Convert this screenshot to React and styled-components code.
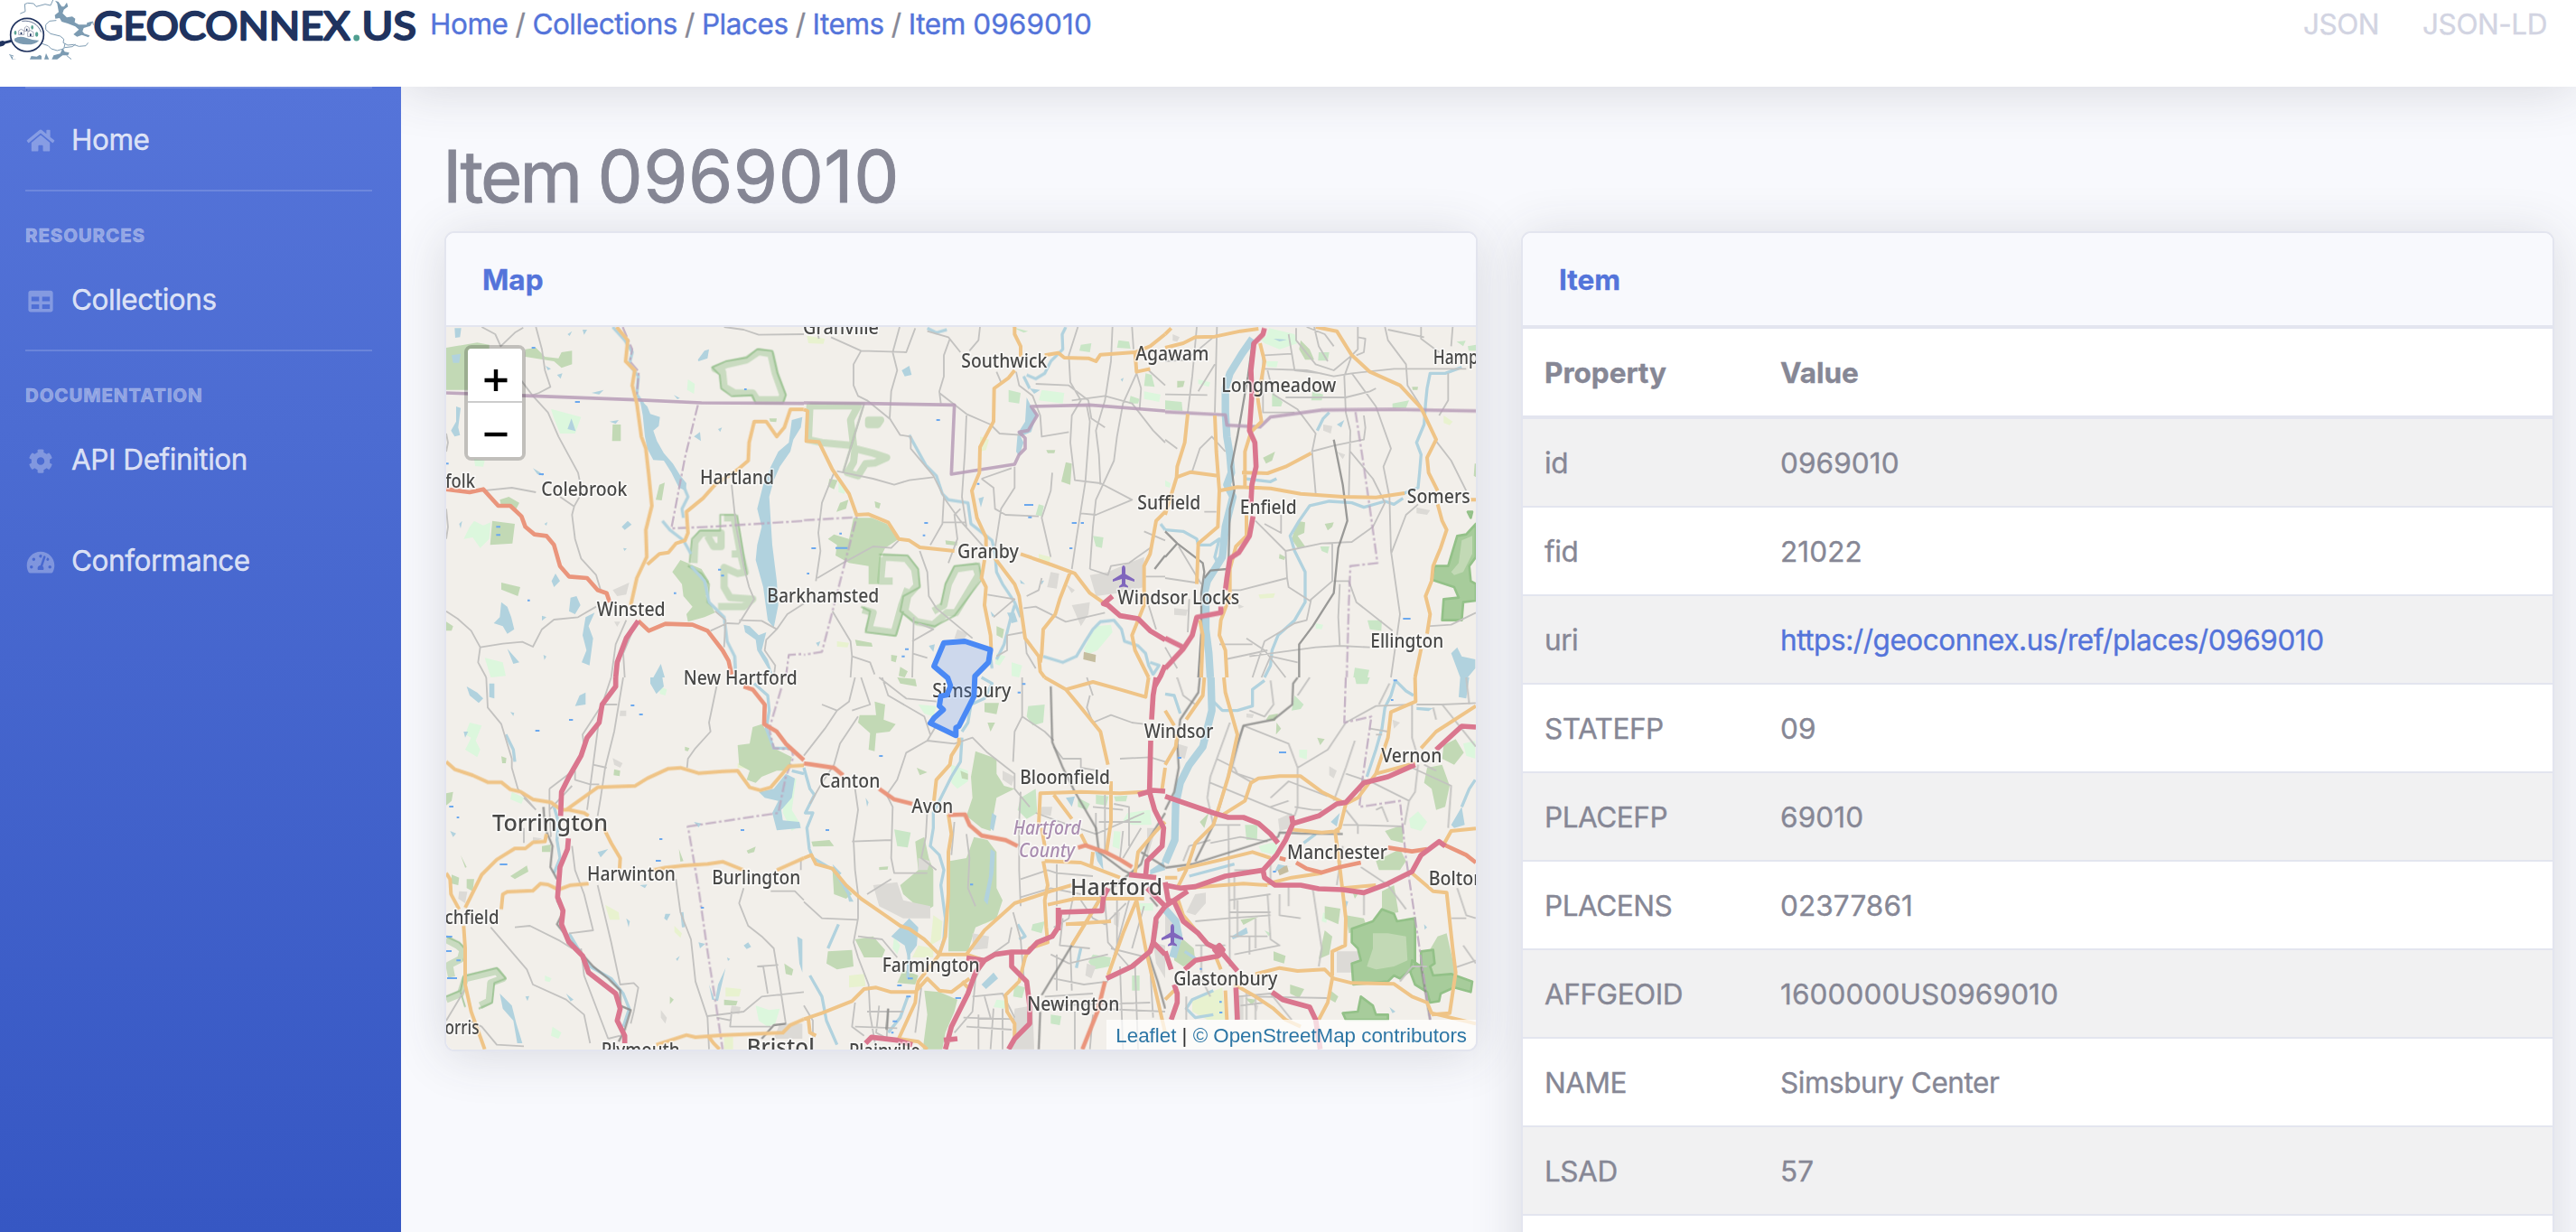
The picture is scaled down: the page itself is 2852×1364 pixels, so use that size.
import React from "react";
import styled, { createGlobalStyle } from "styled-components";
import { FaHome, FaTable, FaCog, FaTachometerAlt } from "react-icons/fa";

const blue = "#5474da";
const gray = "#868795";
const line = "#e3e5ef";
const shadow = "0 5px 56px 0 rgba(58, 59, 69, 0.16)";

const Global = createGlobalStyle`
  * { box-sizing: border-box; }
  html, body { margin: 0; padding: 0; }
  body {
    font-family: Inter, "Liberation Sans", sans-serif;
    font-size: 31.5px;
    line-height: 48px;
    color: ${gray};
    letter-spacing: -0.45px;
    -webkit-text-stroke: 0.35px currentColor;
    overflow: hidden;
  }
`;

const Page = styled.div`
  width: 2852px;
  height: 1364px;
  display: flex;
  flex-direction: column;
  overflow: hidden;
  background: #fff;
`;

const Header = styled.header`
  flex: none;
  height: 96px;
  display: flex;
  align-items: flex-start;
  background: #fff;
`;

const LogoSvg = styled.svg`
  flex: none;
  width: 476px;
  height: 70px;
  -webkit-text-stroke: 0;
`;

const Crumbs = styled.nav`
  display: flex;
  gap: 8px;
  padding-top: 3px;
`;

const Link = styled.a`
  color: ${blue};
  text-decoration: none;
`;

const Digits = styled.span`
  letter-spacing: 0.1px;
`;

const Formats = styled.nav`
  margin-left: auto;
  padding: 3px 32px 0 0;
  display: flex;
  gap: 48px;
`;

const FormatLink = styled.a`
  color: #d2d4e2;
`;

const Main = styled.div`
  flex: 1;
  min-height: 0;
  display: flex;
`;

const Sidebar = styled.aside`
  flex: none;
  width: 444px;
  padding: 0 32px 0 28px;
  display: flex;
  flex-direction: column;
  background: linear-gradient(180deg, #5574d9 0, #4c6cd2 380px, #3657c3 1268px);
`;

const Divider = styled.hr`
  flex: none;
  width: 100%;
  height: 2px;
  border: 0;
  margin: 0 0 ${(p) => (p.$gap ? 32 : 0)}px;
  background: rgba(255, 255, 255, 0.16);
`;

const NavHeading = styled.div`
  padding-top: 1px;
  height: 31.2px;
  font-size: 20.5px;
  line-height: 31.2px;
  font-weight: 800;
  letter-spacing: 0.85px;
  text-transform: uppercase;
  color: rgba(255, 255, 255, 0.4);
`;

const NavItem = styled.a`
  height: 112px;
  padding-top: 2px;
  display: flex;
  align-items: center;
  gap: 17px;
  color: rgba(255, 255, 255, 0.8);

  svg {
    width: 34px;
    height: 27.2px;
    margin-top: 2px;
    color: rgba(255, 255, 255, 0.3);
  }
`;

const Content = styled.main`
  position: relative;
  flex: 1;
  padding: 51px 24px 0 48px;
  background: #f8f9fd;
  overflow: hidden;

  &::before {
    content: "";
    position: absolute;
    inset: -96px 0 auto 0;
    height: 96px;
    box-shadow: ${shadow};
  }
`;

const Title = styled.h1`
  margin: 0 0 13px -2px;
  font-size: 79.5px;
  line-height: 96px;
  font-weight: 400;
  letter-spacing: -2.9px;
  -webkit-text-stroke-width: 0.9px;

  ${Digits} { letter-spacing: 0.5px; }
`;

const Columns = styled.div`
  display: grid;
  grid-template-columns: 1fr 1fr;
  gap: 48px;
  align-items: start;
`;

const Card = styled.section`
  border: 2px solid ${line};
  border-radius: 11px;
  background: #fff;
  box-shadow: ${shadow};
`;

const CardHeader = styled.h6`
  margin: 0;
  height: 104px;
  padding: 2px 40px 0;
  display: flex;
  align-items: center;
  border-bottom: 2px solid ${line};
  border-radius: 9px 9px 0 0;
  background: #f8f9fd;
  color: ${blue};
  font-size: 31.5px;
  font-weight: 700;
  letter-spacing: 0;
`;

const MapBox = styled.div`
  position: relative;
  height: 800px;
  overflow: hidden;
  border-radius: 0 0 9px 9px;
  -webkit-text-stroke: 0;
`;

const MapSvg = styled.svg`
  display: block;
  width: 1140px;
  height: 800px;
`;

const ZoomControl = styled.div`
  position: absolute;
  top: 20px;
  left: 20px;
  width: 68px;
  border: 4px solid rgba(0, 0, 0, 0.2);
  border-radius: 8px;
  background-clip: padding-box;
`;

const ZoomButton = styled.div`
  height: 60px;
  padding: ${(p) => (p.$top ? "12px 0 0 2px" : "10px 0 0 2px")};
  display: flex;
  align-items: center;
  justify-content: center;
  background: #fff;
  border-radius: ${(p) => (p.$top ? "4px 4px 0 0" : "0 0 4px 4px")};
  border-bottom: ${(p) => (p.$top ? "2px solid #ccc" : "0")};
`;

const Attribution = styled.div`
  position: absolute;
  right: 0;
  bottom: 0;
  height: 33px;
  padding: 0 10px;
  background: rgba(255, 255, 255, 0.72);
  font: 22.35px/36px "Liberation Sans", Arial, sans-serif;
  letter-spacing: 0;
  color: #333;
  white-space: nowrap;

  a { color: #2d76a5; }
`;

const Table = styled.table`
  width: 100%;
  border-collapse: separate;
  border-spacing: 0;
  table-layout: fixed;
`;

const HeadCell = styled.th`
  width: ${(p) => p.$w || "auto"};
  height: 102px;
  padding: 2px 24px 0;
  text-align: left;
  font-weight: 700;
  letter-spacing: 0;
  border-top: 2px solid ${line};
  border-bottom: 4px solid ${line};
`;

const Row = styled.tr`
  background: ${(p) => (p.$striped ? "#f1f1f2" : "#fff")};
  td { border-top: ${(p) => (p.$first ? "0" : `2px solid ${line}`)}; height: ${(p) => (p.$first ? 96 : 98)}px; }
`;

const Cell = styled.td`
  padding: 2px 24px 0;
  white-space: nowrap;
`;

/* Origins of the map tiles on the drawing; tile units are thirds of a pixel. */
const tiles = {
  A: [490, 350], B: [890, 350], C: [1290, 350],
  D: [490, 750], E: [890, 750], F: [1290, 750],
};

const layers = [
  { fill: "#dcf7dd", d: {
    A: "M105 680L135 695 160 685 155 740 125 770 100 735 70 740 90 700ZM360 308L460 335 440 390 390 390 370 340ZM140 1135L200 1150 210 1195 160 1200ZM815 210L838 225 835 258 812 245ZM105 475L140 480 135 500 108 498Z",
    B: "M970 1030L1020 1025 1025 1050 975 1110 940 1125 930 1105ZM790 245L865 255 860 290 780 280ZM690 1150L725 1160 715 1200 690 1195ZM640 1120L670 1130 650 1160 635 1155ZM115 545L138 565 135 590 115 585ZM1130 250L1185 260 1180 285 1130 275Z",
    C: "M345 40L430 60 440 90 380 110 330 90 310 70 335 70ZM110 210L150 220 145 235 110 225ZM335 150L375 150 370 170 340 168ZM500 1020L525 1025 520 1040 500 1038ZM0 545L18 555 15 570 0 565Z",
    D: "M90 150L130 160 110 210 125 240 115 265 75 240 95 200 75 190ZM230 380L270 400 262 420 225 405ZM1135 340L1175 335 1160 440 1190 490 1160 510 1130 450ZM1040 1090L1085 1105 1120 1100 1105 1150 1080 1160 1050 1140ZM720 30L745 40 740 60 722 55ZM365 1160L395 1180 385 1200 360 1190ZM340 990L362 1000 355 1012 340 1008Z",
    E: "M1075 450L1150 440 1155 490 1090 490 1060 475ZM380 90L440 95 430 130 400 120ZM1030 510L1052 512 1048 570 1025 562ZM640 1070L680 1075 670 1100 630 1095ZM1110 750H1160V775H1110ZM490 290L545 310 545 345 510 370 490 350ZM300 860L320 890 310 920 295 900Z",
    F: "M310 560L370 545 372 590 320 580ZM810 470L840 445 870 480 850 510 815 500ZM445 240L472 240 470 272 445 265ZM525 780L540 790 535 815 520 810ZM990 220L1030 210 1030 270 1000 260Z",
  }},
  { fill: "#e8f2cf", d: {
    B: "M10 65L70 75 65 92 15 90ZM110 1080L150 1085 145 1100 110 1098ZM585 400L615 410 605 445 585 450ZM780 790L820 800 815 820 780 815Z",
    D: "M540 755L585 780 588 805 555 805ZM940 1030L992 1035 985 1060 940 1060ZM770 825L795 850 790 865 770 845ZM935 1195H965V1235H935ZM980 285L1020 290 1015 302 980 300Z",
    E: "M150 990L200 985 205 1025 150 1030ZM430 790L460 810 455 870 420 890ZM380 890L430 900 430 930 360 930ZM600 770L650 760 640 800 600 820Z",
    F: "M90 1070L190 1030 200 1137 140 1137 90 1110Z",
    C: "M925 330L955 350 945 362 925 355ZM310 925L365 920 360 935 315 938Z",
  }},
  { fill: "#c2d9b5", d: {
    A: "M12 105L115 88 155 95 155 245 12 245ZM275 110L310 105 340 135 385 140 395 120 430 115 430 160 395 172 370 150 275 135ZM565 360H592V415H563ZM195 885L258 900 250 930 195 908ZM165 680L240 690 232 755 158 760ZM190 610L220 600 255 620 245 640 195 630ZM720 560L738 553 728 612 708 610ZM790 810L860 840 885 880 875 930 905 985 870 1000 815 1015 810 990 830 965 800 930 795 890 763 850ZM12 1015L35 1030 30 1045 12 1045ZM1085 340L1110 340 1108 352 1088 350Z",
    B: "M165 670L225 670 275 690 315 740 270 770 255 800 250 890 215 890 215 830 150 820 105 795 110 760 80 740 100 725 150 740ZM870 485L890 490 885 560 855 550ZM120 620L148 610 140 640 108 650ZM85 540L112 545 100 575 80 565ZM235 615L255 622 250 640 238 635ZM170 1075L225 1085 228 1098 175 1095ZM290 1125L310 1128 305 1150 290 1145ZM470 745L510 750 508 762 472 758ZM640 1030L665 1040 660 1070 640 1060ZM805 445L835 445 832 455 810 455ZM320 1165L345 1180 335 1200 315 1195Z",
    C: "M450 80L480 110 495 145 465 145 445 110ZM440 680L465 685 462 720 440 730 465 765 440 770 420 740ZM325 470L365 450 355 480 335 490ZM530 690L560 685 555 700 540 712ZM40 215L65 215 60 235 40 238ZM380 790L400 800 395 810 378 805ZM1028 490L1032 490V535L1025 530ZM820 235L840 235 838 245 822 245Z",
    D: "M1030 165L1060 155 1085 190 1100 235 1160 265 1150 310 1110 310 1060 330 1040 350 1010 340 1020 310 985 290 980 225 1020 220ZM12 385L35 380 30 410 12 425ZM225 660L280 625 285 645 240 670ZM330 560L360 555 358 580 330 580ZM80 670L105 670 100 710 80 700ZM1135 950L1165 970 1160 990 1140 985ZM935 1070L980 1075 975 1090 935 1088ZM570 305L590 310 588 328 568 325ZM785 570L800 610 790 612ZM30 655L55 665 52 690 30 685ZM195 262L212 268 210 285 198 285ZM805 230L820 235 815 245 805 243ZM1010 575L1040 562 1035 580 1015 585ZM755 1060L768 1070 755 1085ZM60 590L80 630 75 632Z",
    E: "M235 80L270 90 265 140 305 155 285 180 240 185 235 245 215 240 220 185 180 150 185 125 240 125ZM570 245L640 270 640 320 665 360 700 370 640 400 620 510 590 500 540 460 560 400 555 330ZM565 530L610 540 640 580 640 700 660 740 640 800 570 830 545 910 480 910 485 610 540 600ZM370 545L400 530 415 600 430 640 430 760 400 780 330 720 320 690 380 640ZM95 640L160 720 140 735 100 720ZM170 870L230 860 270 905 260 930 200 930ZM80 910L160 905 165 960 110 970 75 950ZM400 1040L450 1045 510 1070 500 1110 470 1180 460 1235 395 1235 410 1120ZM600 85L648 85 640 122 600 115ZM375 300L410 315 385 325ZM310 0L370 5 375 30 320 20ZM25 545L85 540 100 560 30 562ZM330 970L380 990 370 1020 310 1015ZM610 150L635 150 620 180ZM250 630L280 628 278 638 250 640ZM520 310L545 320 545 340 525 335Z",
    F: "M925 225L965 205 992 250 960 290 920 270ZM870 300L920 290 945 360 930 430 900 440 885 370 860 350ZM730 510L790 490 790 550 750 540ZM700 610L780 570 800 610 780 640 710 640ZM720 710L760 690 775 780 720 790ZM530 760L582 768 575 820 530 800ZM530 840L555 860 545 920 510 935ZM905 860L935 850 960 960 960 990 880 990 870 920ZM600 790L660 800 670 830 610 850ZM250 805L310 795 260 822ZM360 910L400 925 395 950 360 940ZM415 1020L462 1035 445 1065 415 1050ZM30 900L60 870 95 900 100 940 60 960 30 940ZM115 480L145 450 130 500ZM345 125L375 120 365 145 335 140ZM550 1040L575 1060 565 1080 548 1070ZM620 705L640 720 630 735ZM265 1065L300 1070 290 1090ZM505 200L530 205 515 225ZM370 150L385 170 368 190Z",
  }},
  { fill: "#c9e6c6", d: {
    B: "M680 245L720 255 715 290 680 285ZM780 625L797 630 790 665 770 660ZM960 730L995 735 990 770 970 765ZM1045 80L1080 85 1085 108 1040 105ZM1085 265L1115 275 1110 290 1080 290ZM1135 190L1155 195 1165 235 1130 232ZM920 95L955 90 950 120 915 115ZM690 36L745 50 730 55Z",
    C: "M510 120L545 120 540 148 508 148ZM0 280L55 285 58 315 0 310ZM355 250L390 285 385 300 355 300ZM490 250L525 260 520 280 485 280ZM755 290L810 280 800 305 755 305ZM672 1010L720 1010 718 1045 680 1040ZM630 1168L678 1175 672 1200 625 1200ZM515 765L545 765 540 788 520 780ZM968 85L998 82 990 100ZM1005 100L1032 95V115L1008 115Z",
    E: "M300 505L355 515 345 565 310 560ZM745 95L800 90 795 150 760 160 740 130ZM700 1020L735 1030 725 1065 695 1060ZM720 400L770 370 775 450 740 470 710 440ZM760 820L800 810 790 850 755 840ZM820 1120L855 1125 850 1155 820 1150ZM1090 990H1115V1040H1090ZM970 390L1012 395 1005 425 970 420ZM910 400L950 420 940 440 910 430ZM960 920L1020 930 1015 960 965 970 945 945ZM1030 395L1075 392 1070 412 1035 412Z",
    F: "M630 0H680L672 22H635ZM430 60L460 90 450 105 420 110ZM265 490L307 490 305 540 270 540ZM330 840L350 850 345 860Z",
  }},
  { fill: "#dcdad6", d: {
    A: "M565 910L620 885 610 925 580 930ZM570 1015L590 1015 580 1032Z",
    B: "M820 850L848 855 840 905 808 900ZM890 960L950 950 945 990 920 1030ZM950 860L1010 850 1080 820 1130 800 1130 900 1040 920 970 930ZM510 1040L545 1055 530 1075 500 1070ZM870 890L900 910 890 920Z",
    C: "M30 970L75 975 70 995 30 992ZM525 360L555 365 550 390 525 380ZM835 635L880 645 870 660 835 655ZM570 450L598 460 590 475ZM25 60L48 70 40 85 25 82ZM240 955L262 965 245 972Z",
    D: "M565 268L598 285 590 300 570 290ZM55 710L82 712 75 750 52 735ZM960 1090L990 1095 985 1118 955 1112ZM725 1105L745 1130 740 1150 725 1130ZM590 110H610V128H588ZM1120 1150H1195V1200H1100ZM300 530L330 535 300 550Z",
    E: "M230 690L310 680 330 740 420 760 420 800 330 800 250 760ZM940 950L970 960 955 1000 935 990ZM700 1100L760 1090 765 1235 690 1235ZM560 850L615 860 610 900 560 905ZM790 430L825 430 820 460 785 455ZM660 310L700 330 690 360 660 340ZM380 600L420 610 410 640 380 640ZM1140 500L1170 500 1140 600ZM1160 880L1200 890V1000L1170 950ZM1030 780L1050 780 1045 830 1030 820Z",
    F: "M100 720L135 715 135 750 100 790 70 780ZM375 470L420 450 415 500 380 510ZM40 220L75 230 65 270 40 260ZM545 295L570 310 560 335 545 325ZM755 140L780 150 760 170ZM570 910L650 910 640 980 570 980ZM270 120L295 122 290 135 270 133ZM0 780L20 790 40 850 0 870ZM230 1060L260 1060 260 1137 230 1137ZM290 1080L310 1090 305 1110Z",
  }},
  { fill: "#c5bd9f", d: { B: "M930 1115L970 1125 968 1150 928 1140Z", F: "M370 630L405 625 410 645 380 658Z" }},
  { fill: "#b1d2de", d: {
    A: "M655 275L680 300 690 325 722 335 718 365 700 380 712 415 735 455 765 490 790 530 810 555 808 580 785 570 760 520 735 480 700 478 680 440 672 400 665 330ZM1160 345L1195 335 1190 370 1165 410 1155 450 1120 500 1100 545 1085 600 1090 680 1095 760 1110 880 1115 960 1100 1035 1080 1010 1065 900 1040 810 1045 760 1060 700 1045 640 1065 560 1090 500 1115 450 1150 420ZM45 300L60 305 52 370 58 395 40 400 28 380 45 350ZM40 40L62 40 58 70 42 72ZM195 950L215 965 228 1000 238 1040 215 1055 200 1030 170 1020 190 1000ZM475 1000L505 985 485 1030 500 1070 488 1160 462 1150 478 1110 465 1060ZM425 935L445 930 458 960 440 990 420 980ZM375 855L390 880 370 900 362 880ZM848 145L870 115 885 110 880 140 850 150ZM835 400L855 385 858 415ZM415 375L428 340 442 382ZM595 700L615 680 628 692 605 710ZM1000 1025L1020 1030 1050 1060 1075 1050 1060 1110 1080 1140 1100 1200 1075 1160 1045 1110 1040 1075 1005 1050ZM700 1200L725 1155 738 1200ZM215 1105L255 1150 235 1155ZM30 130L60 125 55 155 35 155ZM465 45L480 45 470 62ZM495 255L535 245 520 260ZM380 195L398 190 392 208ZM555 350L585 345 575 358ZM300 505L325 520 335 530 315 525ZM915 375L928 370 922 385ZM768 262L788 272 780 276ZM330 995L345 1000 330 1012ZM55 690L65 680 60 705ZM335 1125L345 1130 338 1142ZM338 690L348 684 345 696ZM600 770L612 772 604 780ZM342 165L360 175 350 180ZM415 60L430 50 422 66Z",
    B: "M740 270L755 300 775 325 755 385 720 400 730 420 715 465 705 450 710 390 735 350ZM325 180L350 165 358 195 335 200ZM580 605L598 600 588 635ZM750 240L785 245 765 258ZM415 1095L435 1090 430 1115ZM675 985L700 985 710 1015 690 1020ZM40 1085L55 1080 48 1098ZM620 980L635 995 625 998ZM718 875L735 890 720 888ZM1052 210L1062 205 1058 218ZM785 880L798 878 790 892Z",
    C: "M950 1120L970 1100 985 1130 1030 1140V1170L1005 1200 980 1200ZM570 360L595 345 585 370ZM360 75L405 78 380 84Z",
    D: "M80 30L115 50 135 70 120 85 90 60ZM155 20L172 20 172 70 155 65ZM455 60L475 50 475 90 440 95ZM690 0H730L735 30 710 55 690 20ZM1050 380L1100 370 1140 320 1170 335 1160 400 1125 440 1130 475 1185 480 1190 500 1110 508 1095 450 1115 410 1070 400ZM190 1050L230 1090 245 1150 265 1215 248 1215 235 1140 200 1100ZM905 1075L915 1020 940 965 925 1030 915 1075 895 1070 885 1020ZM1178 860L1195 870V980L1185 950ZM740 785L757 785 745 808 736 800ZM850 880L872 885 855 900ZM70 180L85 180 75 200ZM410 1050L435 1070 425 1076ZM25 510L45 518 35 530ZM515 580L550 570 525 598ZM835 480L860 485 850 498ZM1000 890L1015 880 1025 895 1010 902ZM775 935L788 925 780 942ZM275 1060L288 1058 282 1075ZM610 800L622 810 618 830ZM655 690L680 688 672 700ZM945 930L955 935 948 942ZM225 115L238 118 235 128Z",
    E: "M320 830L350 800 380 830 375 890 345 930 335 890 290 860ZM625 450L640 460 630 510 618 500ZM620 570L635 580 630 650 610 755 598 740 615 660ZM590 1020L630 980 645 1000 605 1035ZM870 400L900 395 890 430ZM965 570L990 590 995 640 975 610ZM205 400L215 415 210 430ZM140 700L165 745 150 745ZM95 620L125 650 110 665ZM1150 640L1195 610 1200 640 1150 655ZM1140 680L1170 720 1150 725Z",
    F: "M980 0H1010L1000 70 975 65ZM950 490L985 430 995 490 960 500ZM220 860L270 830 275 850 225 870ZM375 620L420 630 400 625 360 650ZM835 98L890 102 875 112 835 108ZM685 930L700 925 680 965ZM860 820L870 830 862 838ZM745 1095L765 1110 755 1115ZM550 480L580 450 570 495ZM595 740L608 745 600 770Z",
  }},
  { stroke: "#8dbf83", w: 24, o: 0.4, d: {
    A: "M905 175L945 160 1010 145 1050 118 1090 125 1105 190 1130 260 1125 278 1045 278 1030 255 970 255 935 235 930 185ZM935 670L968 670 990 790 1005 850 980 855 935 835 935 900 955 935 1030 940 1000 965 915 965M835 820L838 750 860 720 925 720 925 765 900 765 880 730M960 790L990 790",
    B: "M20 298H180L155 345 165 430 60 420 15 410ZM170 440L230 455 275 470 235 488 205 490 180 530 145 520 165 485ZM215 345H255L245 360H215ZM262 800L340 805 368 840 376 895 345 930 335 980 375 1015 430 1025 475 985 505 985 580 860 570 830 505 840 480 890 465 960 430 980M195 975L230 985 215 1040 300 1052 325 960 345 905M262 800L255 880 295 880",
    D: "M12 870L50 890 68 905 60 935 22 955 30 995M12 1070L60 1050 75 1000 180 975 200 1000 160 1015 155 1075 125 1090",
  }},
  { stroke: "#84b67b", w: 6, o: 0.6, d: {
    A: "M895 170L940 150 1010 138 1045 110 1095 115 1112 190 1140 262 1130 290 1040 290 1028 262 960 266 925 240 920 195ZM815 830L860 855 885 890 880 950 910 975M978 660L1010 860M820 820L828 740 855 712 922 712 922 660 975 660",
    B: "M20 290H200L130 520M250 792L345 795 380 840 385 900 330 930 320 980 365 1015 435 1030 500 995 590 875 582 822 500 830 470 890 455 960M190 965L220 980 205 1050 305 1062 330 980",
    D: "M12 860L55 880 78 905 70 940M60 1045L75 1095M12 1060L60 1040 70 992 180 965 210 1000 172 1015 165 1080 120 1100",
  }},
  { fill: "#a7cc9b", stroke: "#93c188", w: 8, d: {
    C: "M970 730L1000 725 1032 690V800L1010 830 1015 880 1032 890V945L990 950 985 1010 920 1010 925 940 975 935 960 900 885 875 895 830 940 830ZM1005 650L1020 650 1015 670Z",
    F: "M620 835L690 810 720 770 760 785 770 810 830 800 830 960 780 1000 760 990 740 1010 625 1020 620 950 650 940 640 900 620 880ZM820 940L850 960 850 910 890 905 895 950 880 960 890 990 950 985 1020 1010 1015 1045 960 1030 915 1050 910 1075 880 1080 870 1045 830 1020 815 980ZM650 1060L690 1090 700 1120 740 1120 740 1137H600L590 1115 640 1110Z",
  }},
  { fill: "#c2d9b5", d: {
    F: "M690 850L740 850 800 860 805 940 760 960 700 970 670 960 690 900Z",
    C: "M985 745L1020 730 1020 790 990 850 960 860 950 850 975 820Z",
  }},
  { stroke: "#b1d2de", w: 10, d: {
    A: "M565 36L605 80 630 120 620 160 650 200 645 260 665 290M790 540L815 600 795 640 800 670M730 680L755 710 800 745 825 790M825 830L870 880 885 950 935 1000 945 1080 970 1130 972 1180",
    B: "M350 395L380 450 405 495 440 530 460 590 480 610 545 620 555 690 600 725 625 745 635 790 640 850 660 890 700 950 720 1000M700 960L685 1010 665 1090 640 1140M870 36L858 60 860 110 820 150 800 190 770 208 740 195M410 40L440 55 475 45M795 1130L860 1150 905 1130 935 1080 960 1040 985 1015 1030 1010 1055 1040 1065 1080 1110 1095 1135 1120 1145 1160 1160 1190 1180 1160 1150 1150M1185 690L1200 710M730 200L750 240M620 1130L625 1170",
    C: "M790 605L760 625 730 615 660 635 620 620 545 615 480 630 445 680 415 730 430 780 465 850 465 950 430 1010 375 1060 355 1110 350 1160 330 1200M985 170L930 190 880 190 870 240 865 290 860 360 835 420 850 460 845 520 840 570 790 590M0 710L60 715 105 740 110 760 150 760 180 740 165 800 180 830M505 380L525 340 545 320M265 540L350 550 370 540",
    D: "M370 430L385 480 380 540 390 600 370 650M420 850L450 900 490 960 560 1000 600 1050 620 1100 600 1160M210 190L235 240 240 280M1035 20L1080 60 1085 110 1075 170 1100 235 1160 235M1160 310L1200 320M795 780L800 830",
    E: "M525 200L520 280 490 330 460 390 430 450 430 500 420 560 450 590 465 640 455 690 470 800 465 870 445 930M0 300L20 370 35 390 5 450 30 450 10 500 18 570 30 600 100 640 150 720M20 990L60 1060 75 1140 110 1220M345 1060L320 1130 280 1180M920 900L905 965M590 0L625 20 600 70 555 90 545 150 525 180M115 820L80 900M350 900L345 1000M710 820L735 860 715 870",
    F: "M160 80L190 110 240 110 290 95 290 40 330 10M765 10L750 60 730 100 720 170 700 240 670 330M765 10L800 45 825 60M0 55L30 60 50 120M985 430L1010 370 1030 340M80 660L230 620M65 910L110 940M160 1040L90 1070 70 1100 100 1130 160 1120M460 550L500 520",
  }},
  { stroke: "#b1d2de", w: 25, d: {
    C: "M290 75L255 125 215 190 200 240 200 320 205 400 215 460 220 520 205 560 225 600 200 700 190 800 140 880 130 920 135 960 135 1040 145 1120 150 1200",
    F: "M152 0L155 110 125 230 80 290 50 350 35 420 32 540 0 615M0 770L35 810 45 860 25 930",
  }},
  { stroke: "#c3c2c0", w: 5.5, d: {
    A: "M130 36L175 60 193 100 240 55 268 38M310 36L330 110 340 180 358 235 320 255 300 262M262 215L300 265 350 320 385 400 450 520 455 545M130 580L230 570 310 585M390 600L437 632 455 600M437 632L430 660 440 740 460 805 510 860 525 910M12 980L50 1005 95 1045 125 1100 118 1150 145 1200M125 1100L200 1088 265 1082 300 1098 330 1040 370 1008 450 1000 510 965M610 1010L575 1090 560 1200M640 1025L600 1120 605 1200M960 560L975 700 1000 830 1018 900 1035 940 985 1020M890 1045L945 1020 985 1022M985 1010L1060 1012 1110 1040 1145 990 1200 955M1110 1040L1075 1075 1070 1110 1105 1160 1100 1200M935 36L1000 45 1050 62 1200 60M905 980L940 1010 935 1100M12 390L18 420 12 450M12 640L18 700 12 740",
    B: "M90 70L190 115 340 120 370 40M318 36L295 120 310 180 290 250 285 340 320 395 355 400 355 440 430 530 470 610 520 680 600 770M190 115L165 160 165 230 180 265 210 280 290 345M410 50L480 70 520 120M485 75L465 130 465 200 450 250 455 290M450 255L540 325 620 360 650 390 720 395M540 330L535 450 525 600 540 700M200 292L130 520M110 515L230 540 300 560 350 545 430 535M100 520L60 620 48 720 55 780 40 880M45 870L130 820 230 765 290 770 315 745M590 540L630 570 635 640 670 660 780 665M590 540L690 505M825 520L820 580 790 670 820 800M700 500L700 570 655 640 635 770M705 185L715 230 760 265 785 330 790 400 880 385M640 185L655 220M770 225L880 230 945 280 955 340 1000 370M910 36L880 130 885 220 920 280 890 330 885 420 900 545 985 555 1090 610 970 660 920 655M1025 36L1020 150 1000 280 970 380 980 460 985 560M1105 190L1060 290 1040 400 1030 480 970 610 960 700 950 840M940 300L950 350 935 550 905 740 890 840M1090 36L1095 110M1105 190L1120 240 1115 310M890 280L1000 265 1090 290 1160 380 1200 420M385 780L410 850 415 930 440 970 560 1070M465 600L460 690 420 760M460 685L540 685M520 640L500 660 510 740 480 820M730 970L770 965 870 1015 1000 985M95 980L155 1080 160 1130 155 1200M160 1130L220 1150 235 1190M365 1000L360 1200M610 925L700 940 630 1000M640 1130L675 1110 675 1060 730 1050M790 870L780 910 740 930M950 840L1010 860 1020 830 1080 820 1150 770M360 1080L430 1040 380 1020M585 36L580 80 550 115M735 1070L740 1120 770 1170M1145 960L1170 1040M1135 865H1200M1130 715L1200 745M360 1120L410 1135M40 30L50 75M1145 180L1200 230",
    C: "M105 36L90 200 75 320M172 36L165 320M0 260L140 262M0 150L70 145 160 70M330 130L420 125M330 175L470 180 560 200 620 190 760 175 1000 175M435 40L435 80 500 160 560 180 620 130 640 110 640 36M340 180L360 260 440 310 500 390 488 450 500 590M730 36L740 80 800 160 805 230 850 300M850 36L850 75 910 120M955 36L950 100M620 130L595 200 600 320 615 380 610 600M620 190L700 300 750 440 725 500 745 600 750 780 780 990 750 1200M485 450L560 430 660 410 665 370 660 330M400 270H600L680 250 700 240M900 415L950 480 1000 580M940 190L940 280 910 330M750 790L800 660 840 625M615 450L690 540 730 620 690 700 620 750 520 755 400 780M555 755L555 880 480 945 410 900 405 870 250 910 220 910M560 880L610 880 635 950 755 1045M300 680L400 780 405 870M385 660L385 720 330 690M580 890L575 1000 580 1095 500 1100 280 1130M870 1030L950 1025 1032 985M0 870L100 885M200 1140L340 1110M290 1200L330 1080 430 1020 470 1010 485 940M580 1095L680 1100M130 650H170M0 410L40 440M90 515L115 440 155 400 200 450M325 130L325 320 430 320M470 36L530 60 560 100M740 45L860 70M495 36L510 100 540 150M110 250L165 160M640 70L665 75 660 120 635 130M410 60L430 180 520 190M45 765L120 890M80 940L75 1050M0 1100L40 1170M270 1070L330 1110 400 1200M180 1090H290M320 1200L350 1130 440 1150",
    D: "M145 0L150 100 195 155 230 270 230 300 250 370 310 440M560 0L530 90 465 190 470 230M600 0L570 180 540 300 525 400 515 460M530 90H580M525 100L500 290 545 300M500 290L480 440M355 370L420 320M355 370L355 440 360 530M440 310L440 340 490 355 520 355M910 30L885 150 890 180 840 235 815 270 812 300M515 690L560 880 590 1020 635 1015 650 1030 635 1110 625 1150M775 670L790 780 825 870 840 1010 880 1130 885 1235M1000 700L985 750 1015 825 1060 860 1100 900 1120 1020 1140 1150M160 830L280 970 300 1020 410 1070 470 1120 490 1215M240 830L290 825 390 875 430 900M460 900L470 990 550 1200M430 560L440 640 470 720 500 840 420 850M12 1140L75 1035M90 1140L130 1160 180 1220 270 1225M880 1125L1000 1110 1060 1060 1200 1045M1045 960L1115 955M1065 960L1080 1050M960 1110L955 1160 1090 1160M270 550V500M1090 710H1170L1200 740M270 400L310 440M430 360L355 440M910 1130L960 1140M550 1200L590 1190M1190 600V640",
    E: "M170 0L150 80 110 110 70 170 0 260M110 110L60 90M160 110L220 90 190 0M250 0L340 70 440 80M440 160L410 210 340 250 310 340 275 390 295 430 290 600 300 650 410 650M410 210L500 220 560 200 610 250 700 320 700 370 750 430M260 0L280 60 400 130 420 190M20 420L60 350 100 290 120 220 180 130M170 370L180 440 165 540 170 640 180 720 180 800 165 880 180 930 215 1020 220 1120 240 1235M160 545L290 540M0 745L60 800 180 805M180 860L260 870 310 930M210 720L290 670M540 520L550 600 545 700 570 760M500 480L490 590M410 440L405 530 390 600 440 640M725 0L725 130 700 180 695 280M725 130L800 180 830 210M950 60L940 100 960 150 1020 125 1090 150 1130 155M830 230L860 270 920 270 920 300 980 310M720 380L715 480 715 640 720 760M770 450L880 490 970 520 1130 450M970 450V510M1000 390V580M1060 510L1050 600M1120 500L1060 600M960 430L1060 440M720 670L810 640 840 650 960 660M720 730L820 700 920 720M840 620V760M900 700L880 800 830 830M695 780L720 870 730 990M920 740L960 800 1000 820 1070 750M1000 740L1010 880 1080 960M860 800L850 890 950 900M1040 740V900M1080 740L1010 1000M1130 760L1090 900M820 920L880 950 1010 920M830 1000L930 1020 1010 1010M800 1060L960 1050M820 1090L1150 1080M1050 960L1060 1235M1100 960L1110 1235M970 1100L1200 1110M900 1110V1235M960 1120L950 1235M1150 960L1160 1130M840 920V1040M885 890L890 1040M1020 900L1140 930M590 960L570 1000 560 1110 500 1180M560 1060L660 1050 700 1130M630 1100L620 1235M660 1100V1235M530 1130L700 1135M540 1160L690 1170M580 1120V1235M600 1060L620 1130M0 1090L30 1140 30 1235M170 1080L160 1160 200 1190M250 1090L240 1180 280 1200M280 1100L275 1200M210 1110H330M170 1160L310 1165M390 1030L370 1180M610 930L680 880 690 830M940 0L960 60M1030 420L1080 430 1080 560M980 480H1120M1050 270L1150 265 1200 280",
    F: "M215 150L150 330 140 400M260 160L410 220 440 300 440 430 430 460M440 300L540 240 600 150 700 95 820 90M710 90L745 20M820 85L820 200 835 250M170 270L230 300 240 320 300 340M150 350L370 440 430 460M350 400L410 345 540 395M600 320L690 350 810 410M560 410L600 300 630 210M840 290L830 380 810 410 795 490M835 90L920 90 1032 85M920 90L1032 230M210 490L215 960M140 400L160 490 250 490M490 700L520 900 510 960M100 810L210 800 350 790M215 860H340M100 890H200M215 740L350 720M340 720L350 870 380 890 230 920M650 630L740 690 800 770M600 440L640 490 640 520M590 490H640L790 495M700 440L720 430 740 480M820 300L950 360 940 500M970 700L1000 790 1032 800M950 800H1000M780 1010L820 960 870 960M960 965L1032 940M300 1060L540 1065M660 720V790M350 430L410 410M150 550L250 530 340 545M260 160L220 310 290 350M60 610L80 560 150 540M120 890V980M280 860V920M380 720V790L450 800M410 690V760M215 780H350M300 800V900M240 740V860M430 430L490 440 520 440M40 0L60 60 100 90M480 0L440 60M350 10L360 90 330 130 280 110M70 1060V1137M120 1000L150 1060M240 1060L350 1050 420 1137M250 1090L330 1080M270 1040V1137M300 1060V1137M700 190H720M890 100L900 140M990 890L1032 950M1000 0L1010 90M860 290L900 310M680 170L740 180M230 640L320 640M590 560L570 690M350 600V690M230 660V770",
  }},
  { stroke: "#8a8a88", w: 7, o: 0.85, d: {
    C: "M330 50L290 90 275 200 240 400 220 500 230 580 215 640 212 760 210 830M0 715L40 755 125 820 130 850 120 920 120 1050 110 1200M0 800L40 755M130 870L150 845 205 840M560 410L590 560 605 680 575 770 560 920 490 1030 445 1090 445 1200",
    B: "M1165 840L1200 795",
    D: "M335 430L340 500 365 560 358 630 380 670M380 740L400 780 380 820 420 870 500 960 550 1000 590 1040 590 1090 625 1105 605 1170 585 1210M1060 1200L1100 1155 1140 1150",
    E: "M820 30L825 215 860 300 900 380 970 500 980 580 1060 640 1080 650M1200 450L1150 530 1120 620 1085 650 985 730 920 840 790 1055M785 1110L780 1235M1145 920L1175 1010 1200 1100M280 1100L275 1170M1120 580L1200 630M1150 730L1175 760M1175 810L1160 900",
    F: "M115 0L110 50 50 140 40 220 45 300 30 380 0 440M440 0L425 20 422 90 360 140 260 160 240 220 180 430 160 490 100 610M0 632L90 620 375 530M375 530L380 515 450 518 590 520M850 960L880 1137",
  }},
  { stroke: "#b89cb8", w: 11, o: 0.85, d: {
    A: "M12 255L300 265 640 278 860 288 1200 290",
    B: "M0 288L200 290 500 295 490 525 700 492 715 460 735 440 735 405 715 385 745 380 775 330 755 300 950 295 1200 315",
    C: "M0 318L200 328 205 362 315 368 350 335 520 312 760 310 1032 315",
  }},
  { stroke: "#bba5bd", w: 7, o: 0.8, dash: "36 9 9 9", d: {
    A: "M848 295L805 470 760 705 880 700 1200 680M1140 1200L1150 1125 1200 1122M598 36L630 110 622 150 652 185 645 260",
    B: "M0 678L175 668 95 980 60 1115 0 1125",
    C: "M632 318L660 500 680 640 705 820 615 830 610 950 603 1200",
    D: "M1125 36L1085 170 1100 235 1160 240 1165 265 1140 330 1115 450 815 495 850 700 880 910 910 1100 930 1235",
    F: "M600 0L595 150 685 130 655 340 645 430 780 410 800 600 830 800 860 1000 880 1137",
  }},
  { stroke: "#efc487", w: 12, d: {
    A: "M578 36L615 80 608 150 638 180 630 230 645 290 660 400 675 440 685 530 695 630 675 710 678 800 645 870 625 960M680 825L720 790 750 785 775 755 805 745 815 720 810 650 865 605 905 560 980 510 1015 480 1018 420 1035 350 1075 350 1110 400 1135 370 1155 310 1200 310",
    B: "M0 310L12 315 8 415 50 418 95 510 150 590 175 660 215 658 280 685 315 740 350 745 385 768 500 780M720 790L820 825 900 855 950 920 1000 955M700 36L700 60 720 100 720 135M700 180L680 205 632 240 630 350 585 435 583 520 558 580 575 670 605 735 605 765M600 810L590 870 605 900 600 960 620 1060 622 1105M635 805L700 890 715 930 735 1070 780 1130 785 1180 800 1200M800 130L845 122 865 138 945 140 970 150 985 128 1100 120 1150 100 1200 60M1100 120L1105 185 1150 175M885 850L850 940 835 990 795 1040 790 1120 785 1150M1200 650L1170 680 1150 790 1130 830 1130 960 1110 1010 1090 1060 1100 1110 1145 1200",
    C: "M0 105L60 90 100 70 165 68 250 50 310 42M0 60L20 40M315 90L330 150 318 220M305 250L310 290 320 350 285 385 265 450 265 570M165 330L170 450 180 580 175 700 110 755 105 890M75 325L65 420 40 500 38 535 85 518 175 530M38 535L0 660M255 520L340 522 400 500 485 455M180 580L240 568 350 572 450 590 590 600 700 602 795 588M1015 610H1032M500 36L570 50 620 130 680 185 780 230 850 305 900 410 870 470 875 520 905 580M905 625L920 680 935 710 915 770 890 830 885 880 865 930 880 990 870 1055M850 1105L830 1200M270 660L270 730 235 765 215 840 215 930 185 1010 180 1060 200 1110 205 1200M115 1010L125 1060 120 1200",
    D: "M12 280L40 305 100 325 150 348 195 348 225 372 260 380 300 405 360 415 395 440 425 440M12 650L25 670 28 720 55 770M70 825L75 900 75 1020 95 1110 140 1235M75 765L130 655 180 605 240 568 275 568 300 548 340 545 345 520M410 440L515 365 640 360 680 335 750 303 790 300 850 318 930 312 980 310 1020 365 1055 375 1090 365 1150 295 1200 292M420 440L470 450 485 460M535 500L560 550 590 600 588 635M700 640L740 632 800 625 880 620 930 612 1000 640M1110 640L1200 600M195 770L200 720 215 712 300 708 325 685 350 688 385 705 425 690 485 685M710 1220L810 1188 840 1195 930 1188 1130 1180 1155 1155 1200 1135M885 1195L900 1215 920 1235",
    E: "M800 0L870 40 960 15 1050 40 1135 65 1145 0M870 40L920 100 985 180 1010 290M1020 345L1020 480 1005 580M780 490L785 385 920 380 1050 385 1130 380M830 390L890 470M920 520L940 560M515 200L515 220 490 260 485 290 440 340 432 410M480 455L490 520 480 580 480 720 470 860 450 920 380 1010 375 1035 370 1080 315 1200M0 600L25 590 40 620 95 635 140 690 190 735 270 790 320 825 350 835 400 870 450 920 540 920 600 940M0 1135L60 1115 160 1075 200 1035 240 1030 290 1045 370 1045 410 1000 450 1040 490 1045 550 1000M525 1010L550 1035M540 920L600 840 700 750 820 710 890 690M315 1200L380 1210 410 1235M800 560L790 500M800 610L920 615 1050 665M795 610L810 690 800 740 805 830 810 880 750 900 735 930 715 1010 670 1055 675 1110 700 1150 700 1200M810 755L900 735 1130 735M870 820L1020 810M1105 740L1060 850 1010 990M1105 740L1135 900 1170 1050 1200 1180M985 735L890 890M960 580L955 625M1200 480L1170 510 1110 580 1100 650M1200 300L1190 370M15 1135L20 1180 40 1190",
    F: "M130 0L125 60 70 140M195 0L200 50 240 190 210 330 160 490 100 550 70 640 40 700M0 290L35 230 40 190M0 110L30 160M185 460L265 410 285 350 310 335 380 328 450 328 520 380 590 415M830 0L832 80 750 115 740 200 700 320M1032 95L900 180 850 235M600 420L640 400 700 320 830 285M600 420L580 500 565 510M415 505L520 515 580 510M565 515L580 630 600 800 598 890 555 910 555 990M0 665L40 665M40 640L60 635 190 605 290 580 350 600M340 685L420 665 520 650M70 700L260 685 340 690M590 700L700 690M820 650L890 710 935 715 955 900 965 980 945 1115 885 1120M925 555L950 510 1032 502M300 985L380 965 440 975 530 970 560 1000 620 1015 760 1018 820 1060 870 1080 885 1115 1032 1150M555 1000L540 1080 510 1137M40 730L60 790 110 850M165 920L185 970M200 1040L205 1137M230 1020L300 1060 360 1100 400 1137 450 1160M0 1070L30 1040",
  }},
  { stroke: "#ea957c", w: 14, d: {
    A: "M12 575L90 585 135 575 185 630 225 630 262 665 275 700 305 725 345 730 370 760 390 830 420 865 480 870 515 910 545 920 555 950M650 1012L685 1045 740 1022 830 1025 880 1045 930 1110 950 1145 960 1190",
    D: "M1000 30L1030 40 1070 90 1068 155 1110 180 1140 220 1200 275",
    E: "M0 285L100 300 130 325M250 370L300 405 360 420M480 457L535 455 550 490 590 525 670 540 710 560M910 565L935 558 1000 580 1050 605 1090 630M1000 1010L975 1110 925 1235",
    F: "M435 615L470 635 520 648 580 630 650 615M380 600L400 605M740 565L820 578 870 570M925 555L1000 590 1032 615",
  }},
  { stroke: "#da768e", w: 17, d: {
    A: "M650 1012L610 1070 580 1150 575 1200",
    B: "M1025 930L995 955 1010 960 1050 995 1110 1005 1150 1045 1200 1075M1200 1160L1185 1195 1165 1230",
    C: "M330 40L325 60 295 90 285 180 288 260 280 380 298 420 302 500 288 560 285 620M292 665L280 730 245 785 215 805 205 870 200 910M185 965L185 985 105 1000 90 1060 60 1105 0 1170M0 1070L60 1100",
    D: "M575 0L575 30 530 90 520 150 480 200 460 260 420 330 395 380 392 460M418 535L415 570 390 630 382 730 400 775 395 820 420 880 465 925 485 980 575 1050 590 1100 580 1140 605 1190 605 1215",
    E: "M1170 0L1160 60 1155 140M1152 210L1148 380M1110 390L1160 375 1200 378M1148 380L1165 440 1195 500 1190 560 1140 610 1135 660M1080 655L1170 665M1010 700L995 730 990 775 850 780 845 830 825 860 775 880 745 912 690 912 635 920 600 940 540 932M845 765V840M690 915L690 960 740 1010 750 1090 750 1150 700 1200 680 1235M600 940L570 980 545 1050 490 1160 470 1235M465 1205L510 1200M1200 760L1170 800 1160 880 1200 920M1160 880L1150 910 1090 960 1005 1000M1140 700L1200 760M205 1215L225 1195 310 1205 360 1220",
    F: "M0 395L160 450 210 465 260 465 310 485 350 520 375 550M425 485L510 460 570 420 600 415 660 350 740 330 830 290M900 240L985 162 1032 165M425 485L400 540 370 590 325 640 330 665 365 690 450 690 510 702 590 705 660 715 740 685 820 645 850 590 910 545 930 560M0 690L50 700 100 695 200 660 325 640M420 460L425 490M0 760L75 710M0 680L10 740 30 745 60 810 110 850 140 885 180 905 240 975M180 925L100 940 65 970M0 910L20 970M30 1020L40 1050 40 1080 20 1137M235 1030L240 1137M355 1045L390 1070 480 1095 500 1137 515 1235M165 905L180 890 192 905 180 922Z",
  }},
  { stroke: "#6ba8ee", w: 6, d: {
    A: "M440 285H456M12 490H20M320 525H336M178 700H192M178 727H192M282 944H290M768 920H776M296 105H308M1002 243H1010M915 842H925M925 862H935",
    B: "M732 627H762M890 687H906M920 687H930M400 687H412M105 770H145M25 771H40M395 728H403M745 668H757M440 345H452M336 1106H348M325 1130H335M10 855H18M118 722H126M575 557H583M882 771H892",
    C: "M790 1005H815",
    D: "M190 621H215M708 609H725M308 177H322M625 93H637M653 123H665M420 141H433M12 861H32M12 909H30M15 999H48M46 940H60M720 537H730M990 507H1002M858 765H868M22 429H36M47 465H55",
    E: "M345 1000H362M310 1023H325M503 1065H522M725 22H736M710 50H720M250 261H262M72 507H84M552 688H562M295 1142H310M290 1180H298M340 1060H355",
    F: "M378 249H402M42 267H54M758 10H770M750 75H758M358 645H368M180 1078H188M180 1113H190M115 968H122",
  }},
];

const towns = [
  ["Granville", 889, 369.5, 84], ["Southwick", 1064.3, 406.7, 95], ["Agawam", 1257.3, 398.5, 81],
  ["Longmeadow", 1352.3, 433.5, 127], ["Hamp", 1586.7, 402.5, 50], ["folk", 493, 540, 33],
  ["Colebrook", 599.3, 549, 95], ["Hartland", 775, 536, 82], ["Winsted", 660.7, 682, 76],
  ["Barkhamsted", 849.3, 667, 124], ["Granby", 1060, 618, 68], ["Suffield", 1259.3, 564, 70],
  ["Enfield", 1372.7, 569, 63], ["Somers", 1557.7, 557, 70], ["Windsor Locks", 1237.3, 669, 135],
  ["Ellington", 1517.3, 716.7, 81], ["New Hartford", 756.7, 758, 126], ["Windsor", 1266.7, 817, 76.6],
  ["Torrington", 545, 920, 128, 25], ["Canton", 907.3, 871.7, 67], ["Avon", 1009.3, 900, 46],
  ["Bloomfield", 1129.3, 867.7, 99.5], ["Hartford", 1185, 990.7, 102, 25], ["Farmington", 976.7, 1076, 108],
  ["Newington", 1137.3, 1119, 102], ["Harwinton", 650, 975, 98], ["Burlington", 788.3, 979, 98],
  ["chfield", 492.5, 1022.7, 60], ["orris", 492.5, 1145, 38], ["Plymouth", 665.7, 1170, 87],
  ["Bristol", 826.7, 1168, 75, 25], ["Plainville", 940, 1171, 79], ["Vernon", 1529.3, 844, 67],
  ["Manchester", 1425, 951, 111], ["Bolton", 1581.7, 979.5, 62], ["Glastonbury", 1299.3, 1090.7, 115],
];

const TownText = styled.text`
  font-family: "Noto Sans", sans-serif;
  font-size: ${(p) => p.$size || 20.8}px;
  font-weight: 500;
  font-style: ${(p) => (p.$region ? "italic" : "normal")};
  letter-spacing: 0;
  fill: ${(p) => (p.$region ? "#a98db0" : "#484847")};
  stroke: rgba(255, 255, 255, 0.6);
  stroke-width: 3.5px;
  stroke-linejoin: round;
  paint-order: stroke;
`;

const Town = ({ t: [name, x, y, w, size], region }) => (
  <TownText x={x} y={y} textLength={w} lengthAdjust="spacingAndGlyphs" $size={size} $region={region}>{name}</TownText>
);

const Layer = ({ layer }) => (
  <g fill={layer.fill || "none"} stroke={layer.stroke} strokeWidth={layer.w} opacity={layer.o}
    strokeDasharray={layer.dash} strokeLinejoin="round">
    {Object.entries(layer.d).map(([k, d]) => (
      <path key={k} d={d} transform={`translate(${tiles[k][0]} ${tiles[k][1]}) scale(0.33333)`} />
    ))}
  </g>
);

const Plane = ({ x, y }) => (
  <path transform={`translate(${x} ${y})`} fill="#8066bd"
    d="M0-12C1.6-12 2-9.5 2-8V-2.5L12 3.5V6L2 3V8.5L5 11V12.5L0 11.5-5 12.5V11L-2 8.5V3L-12 6V3.5L-2-2.5V-8C-2-9.5-1.6-12 0-12Z" />
);

const MapView = () => (
  <MapSvg viewBox="494 362 1140 800">
    <rect x="494" y="362" width="1140" height="800" fill="#f2efea" />
    {layers.map((l, i) => <Layer key={i} layer={l} />)}
    <Plane x={1244} y={638} />
    <Plane x={1298} y={1035} />
    {towns.map((t, i) => <Town key={i} t={t} />)}
    <Town t={["Hartford", 1121.7, 924, 75]} region />
    <Town t={["County", 1128, 948.5, 62]} region />
    <Town t={["Simsbury", 1032.3, 771.7, 87]} />
    <path transform="translate(890 350) scale(0.33333)" fill="#4a89f5" fillOpacity="0.22" stroke="#4a89f5"
      strokeWidth="18" strokeLinejoin="round"
      d="M465 1085L535 1080 620 1108 613 1150 568 1196 565 1263 515 1362 505 1367 505 1393 420 1352 432 1335 463 1307 450 1295 455 1262 475 1258 487 1228 478 1202 432 1163Z" />
  </MapSvg>
);

const navy = "#20335f";
const river = "#7c9bb2";

const Logo = () => (
  <LogoSvg viewBox="0 0 476 70">
    <g transform="scale(0.33333)" strokeLinecap="round" strokeLinejoin="round">
      <g fill="none" stroke={river} strokeWidth="3">
        <path d="M68 45L84 38 82 14 92 10 112 12 120 22 150 14 168 18 176 0M186 68L165 70 152 82 152 98 168 112 200 120 212 130 210 142 225 150 245 148 262 154 285 152 292 143M140 145L160 152 170 162 190 168 212 162 216 145M215 158L240 155 250 148M222 185L236 196M32 182L44 186M290 78L308 72 310 82" />
      </g>
      <g fill={river}>
        <path d="M182 50L195 40 190 12 183 2 194 6 205 22 213 22 222 8 226 22 212 32 208 44 222 58 240 55 250 62 248 74 262 82 288 82 290 75 308 72 300 86 278 93 274 104 280 112 298 118 294 124 272 116 256 122 244 114 262 98 250 88 225 78 205 72 198 60 184 62Z" />
        <path d="M99 197L104 186 122 188 132 182 138 186V197ZM147 197L153 177 163 197ZM172 197L178 184 200 178 208 160 215 172 230 175 226 184 208 184 190 197ZM32 182L42 190 42 196 56 197 40 197Z" />
      </g>
      <path d="M0 146L36 136" stroke={navy} strokeWidth="9" />
      <path d="M0 146L8 144" stroke={navy} strokeWidth="17" />
      <circle cx="90" cy="116" r="55" fill="#fff" stroke={navy} strokeWidth="5" />
      <path d="M74 70C105 66 128 82 136 106" fill="none" stroke={navy} strokeWidth="2" />
      <path d="M48 128Q65 117 88 126T130 134Q118 148 90 148T48 136Z" fill={river} />
      <g fill="#fff" stroke="#7b8298" strokeWidth="2">
        <path d="M62 114V102L70 97 80 102V114ZM92 120V107L101 101 111 107V120ZM82 102V92L89 87 97 92V102Z" />
      </g>
      <path d="M68 114V107H73V114ZM99 120V112H104V120ZM87 102V95H91V102Z" fill={navy} />
      <g fill="#5aa394">
        <ellipse cx="51" cy="109" rx="4" ry="7" />
        <ellipse cx="107" cy="91" rx="4" ry="7" />
        <ellipse cx="122" cy="114" rx="5" ry="8" />
      </g>
    </g>
    <g fontFamily="Lato, sans-serif" fontWeight="400" fontSize="43" letterSpacing="0" fill={navy} stroke={navy}
      strokeWidth="2.3" strokeLinejoin="round">
      <text x="103.5" y="44.3" textLength="284" lengthAdjust="spacingAndGlyphs">GEOCONNEX</text>
      <text x="400.5" y="44.3" textLength="60.5" lengthAdjust="spacingAndGlyphs">US</text>
    </g>
    <circle cx="394.7" cy="42" r="3.4" fill="#4f9f90" />
  </LogoSvg>
);

const crumbs = ["Home", "Collections", "Places", "Items"];

const rows = [
  ["id", "0969010"], ["fid", "21022"], ["uri", "https://geoconnex.us/ref/places/0969010"],
  ["STATEFP", "09"], ["PLACEFP", "69010"], ["PLACENS", "02377861"],
  ["AFFGEOID", "1600000US0969010"], ["NAME", "Simsbury Center"], ["LSAD", "57"], ["", ""],
];

const Value = ({ name, value }) => {
  if (name === "uri") return <Link>{value}</Link>;
  return /^\d/.test(value) ? <Digits>{value}</Digits> : value;
};

export default function App() {
  return (
    <Page>
      <Global />
      <Header>
        <Logo />
        <Crumbs>
          {crumbs.map((c) => (
            <React.Fragment key={c}>
              <Link>{c}</Link>
              <span>/</span>
            </React.Fragment>
          ))}
          <Link>Item <Digits>0969010</Digits></Link>
        </Crumbs>
        <Formats>
          <FormatLink>JSON</FormatLink>
          <FormatLink>JSON-LD</FormatLink>
        </Formats>
      </Header>
      <Main>
        <Sidebar>
          <Divider />
          <NavItem><FaHome />Home</NavItem>
          <Divider $gap />
          <NavHeading>Resources</NavHeading>
          <NavItem><FaTable />Collections</NavItem>
          <Divider $gap />
          <NavHeading>Documentation</NavHeading>
          <NavItem><FaCog />API Definition</NavItem>
          <NavItem><FaTachometerAlt />Conformance</NavItem>
        </Sidebar>
        <Content>
          <Title>Item <Digits>0969010</Digits></Title>
          <Columns>
            <Card>
              <CardHeader>Map</CardHeader>
              <MapBox>
                <MapView />
                <ZoomControl>
                  <ZoomButton $top>
                    <svg width="26" height="26" viewBox="0 0 26 26"><path d="M0.5 13H25.5M13 1V25" stroke="#000" strokeWidth="4.4" /></svg>
                  </ZoomButton>
                  <ZoomButton>
                    <svg width="26" height="26" viewBox="0 0 26 26"><path d="M0.5 13H25.5" stroke="#000" strokeWidth="4.4" /></svg>
                  </ZoomButton>
                </ZoomControl>
                <Attribution><a>Leaflet</a> | <a>© OpenStreetMap contributors</a></Attribution>
              </MapBox>
            </Card>
            <Card>
              <CardHeader>Item</CardHeader>
              <Table>
                <thead>
                  <tr><HeadCell $w="261px">Property</HeadCell><HeadCell>Value</HeadCell></tr>
                </thead>
                <tbody>
                  {rows.map(([k, v], i) => (
                    <Row key={i} $striped={i % 2 === 0} $first={i === 0}>
                      <Cell>{k}</Cell>
                      <Cell><Value name={k} value={v} /></Cell>
                    </Row>
                  ))}
                </tbody>
              </Table>
            </Card>
          </Columns>
        </Content>
      </Main>
    </Page>
  );
}
